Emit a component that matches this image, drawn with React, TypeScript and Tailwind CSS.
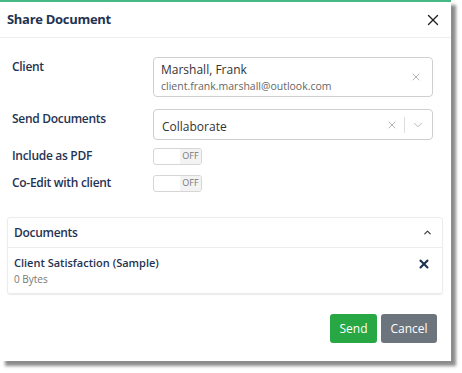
import { X, ChevronDown, ChevronUp } from 'lucide-react'

function Toggle() {
  return (
    <div className="flex h-[17px] w-[49px] overflow-hidden rounded-[3px] border border-[#d6d6d6] bg-white">
      <div className="w-[26px]" />
      <div className="flex flex-1 items-center justify-center bg-[#f3f3f3] text-[9px] text-[#777]">OFF</div>
    </div>
  )
}

export default function App() {
  return (
    <div className="h-[373px] w-[462px] bg-white font-['Open_Sans',sans-serif] text-[#1f3352]">
      <div className="h-[361px] w-[451px] bg-white shadow-[5px_5px_3px_rgba(0,0,0,0.45)]">
        <div className="h-[2px] bg-[#44b984]" />
        <div className="flex h-[36px] items-center justify-between border-b border-[#eeeeee] pl-[7px] pr-[9px]">
          <span className="text-[13px] font-bold tracking-[-0.3px]">Share Document</span>
          <X size={18} strokeWidth={1.8} className="text-[#222]" />
        </div>

        <div className="px-[12px] pt-[19px]">
          <div className="flex">
            <div className="w-[141px] pt-[1px] text-[12px] font-semibold tracking-[-0.3px]">Client</div>
            <div className="flex h-[40px] w-[280px] items-center rounded-[4px] border border-[#cfcfcf] pl-[7px] pr-[10px]">
              <div className="flex-1 pt-[1px]">
                <div className="text-[12px] leading-[18px] text-[#333]">Marshall, Frank</div>
                <div className="text-[10.5px] leading-[15px] text-[#666]">client.frank.marshall@outlook.com</div>
              </div>
              <X size={12} strokeWidth={1.8} className="text-[#aaa]" />
            </div>
          </div>

          <div className="mt-[12px] flex">
            <div className="w-[141px] pt-[1px] text-[12px] font-semibold tracking-[-0.3px]">Send Documents</div>
            <div className="flex h-[31px] w-[280px] items-center rounded-[4px] border border-[#cfcfcf] pl-[8px] pr-[7px]">
              <div className="flex-1 pt-[4px] text-[12px] text-[#333]">Collaborate</div>
              <X size={12} strokeWidth={1.8} className="text-[#aaa]" />
              <div className="mx-[6px] h-[16px] w-px bg-[#ddd]" />
              <ChevronDown size={14} strokeWidth={1.5} className="text-[#aaa]" />
            </div>
          </div>

          <div className="mt-[7px] flex items-center">
            <div className="w-[141px] text-[12px] font-semibold tracking-[-0.3px]">Include as PDF</div>
            <Toggle />
          </div>
          <div className="mt-[9px] flex items-center">
            <div className="w-[141px] text-[12px] font-semibold tracking-[-0.3px]">Co-Edit with client</div>
            <Toggle />
          </div>
        </div>

        <div className="mx-[7px] mt-[25px] w-[436px] rounded-[3px] border border-[#ececec] shadow-[0_1px_1px_rgba(0,0,0,0.08)]">
          <div className="flex h-[30px] items-center justify-between border-b border-[#ececec] pl-[6px] pr-[9px]">
            <span className="text-[12px] font-semibold tracking-[-0.3px]">Documents</span>
            <ChevronUp size={11} strokeWidth={2.5} className="text-[#333]" />
          </div>
          <div className="flex items-start justify-between pb-[6px] pl-[6px] pr-[11px] pt-[7px]">
            <div className="leading-[16px]">
              <div className="text-[11px] font-semibold">Client Satisfaction (Sample)</div>
              <div className="text-[10px] text-[#777]">0 Bytes</div>
            </div>
            <X size={14} strokeWidth={3.5} className="mt-[2px] text-[#1f3352]" />
          </div>
        </div>

        <div className="mt-[20px] flex justify-end gap-[4px] pr-[14px]">
          <button className="h-[29px] w-[47px] rounded-[3px] bg-[#28a745] text-[12px] text-white">Send</button>
          <button className="h-[29px] w-[56px] rounded-[3px] bg-[#6c757d] text-[12px] text-white">Cancel</button>
        </div>
      </div>
    </div>
  )
}
